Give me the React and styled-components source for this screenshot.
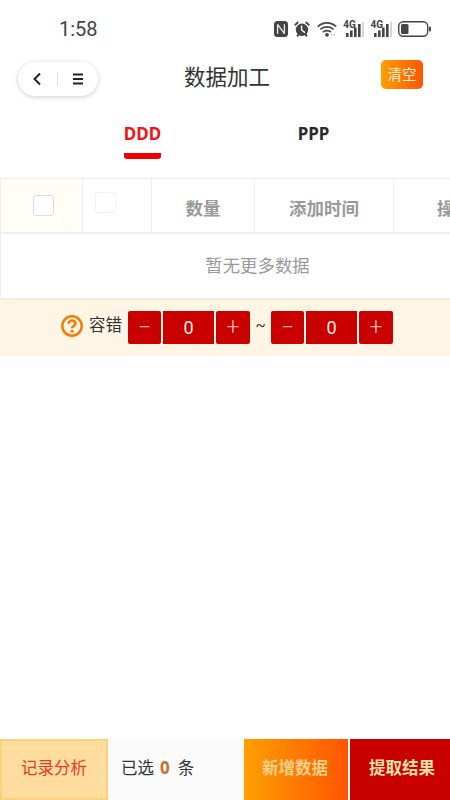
import React from "react";
import styled, { createGlobalStyle } from "styled-components";

const FONT = `"Noto Sans CJK SC", "Noto Sans", Roboto, sans-serif`;

const GlobalStyle = createGlobalStyle`
  html, body {
    margin: 0;
    padding: 0;
    background: #fff;
  }
  * {
    box-sizing: border-box;
  }
`;

const NfcIcon = () => (
  <svg width="14" height="16" viewBox="0 0 14 16">
    <rect x="0" y="0" width="14" height="16" rx="3.5" fill="#444" />
    <path d="M3.6 3.2v9.6M3.6 3.4l6.8 9.2M10.4 3.2v9.6" fill="none" stroke="#e8e8e8" strokeWidth="1.3" />
  </svg>
);

const AlarmIcon = () => (
  <svg width="16" height="16" viewBox="0 0 16 16">
    <circle cx="8" cy="8.8" r="6.2" fill="#444" />
    <path d="M0.8 4.4l3.4-3.4M15.2 4.4l-3.4-3.4M3 15.4l1.4-1.8M13 15.4l-1.4-1.8" stroke="#444" strokeWidth="1.8" fill="none" />
    <path d="M7.6 4.6v4.4l3.4 2.6" stroke="#fff" strokeWidth="1.4" fill="none" />
  </svg>
);

const WifiIcon = () => (
  <svg width="20" height="16" viewBox="0 0 20 16">
    <path d="M0.8 5.6C6 .6 14 .6 19.2 5.6M3.4 8.4c3.7-3.3 9.5-3.3 13.2 0M6 11c2.2-1.8 5.8-1.8 8 0" fill="none" stroke="#444" strokeWidth="1.7" />
    <circle cx="10" cy="13.8" r="1.9" fill="#444" />
    <path d="M13.6 14l1.3-1.1v2.2zM18 14l-1.3-1.1v2.2z" fill="#999" />
  </svg>
);

const SignalIcon = () => (
  <svg width="21" height="16" viewBox="0 0 21 16">
    <rect x="3" y="12" width="2.6" height="4" fill="#444" />
    <rect x="7" y="9.5" width="2.6" height="6.5" fill="#444" />
    <rect x="11" y="6.5" width="2.6" height="9.5" fill="#444" />
    <rect x="15" y="3" width="2.6" height="13" fill="#444" />
    <rect x="19.2" y="1" width="1.6" height="15" fill="#ccc" />
  </svg>
);

const BatteryIcon = () => (
  <svg width="33" height="16" viewBox="0 0 33 16">
    <rect x="0.7" y="0.7" width="29" height="14.6" rx="4.5" fill="none" stroke="#444" strokeWidth="1.4" />
    <rect x="3" y="3" width="7.5" height="10" rx="1.5" fill="#444" />
    <rect x="31" y="5.5" width="2" height="5" rx="1" fill="#444" />
  </svg>
);

const HelpIcon = () => (
  <svg width="22" height="22" viewBox="0 0 22 22">
    <circle cx="11" cy="11" r="9.7" fill="none" stroke="#f57c00" strokeWidth="2.5" />
    <path d="M7.6 8.8c0-2.1 1.5-3.4 3.4-3.4s3.4 1.2 3.4 3c0 2.6-3.3 2.5-3.3 4.8" fill="none" stroke="#f57c00" strokeWidth="2.5" />
    <circle cx="11.1" cy="16.3" r="1.5" fill="#f57c00" />
  </svg>
);

const BackIcon = () => (
  <svg width="10" height="14" viewBox="0 0 10 14">
    <path d="M8 1.5L2.5 7L8 12.5" fill="none" stroke="#222" strokeWidth="2" />
  </svg>
);

const MenuIcon = () => (
  <svg width="12" height="12" viewBox="0 0 12 12">
    <path d="M1 1.5h10M1 6h10M1 10.5h10" fill="none" stroke="#222" strokeWidth="2" />
  </svg>
);

const Stepper = ({ value }) => (
  <StepperRow>
    <StepButton>−</StepButton>
    <StepValue>{value}</StepValue>
    <StepButton $wide>+</StepButton>
  </StepperRow>
);

const App = () => (
  <Page>
    <GlobalStyle />
    <StatusBar>
      <Clock>1:58</Clock>
      <StatusIcons>
        <NfcIcon />
        <AlarmIcon />
        <WifiIcon />
        <Signal>
          <NetLabel>4G</NetLabel>
          <SignalIcon />
        </Signal>
        <Signal>
          <NetLabel>4G</NetLabel>
          <SignalIcon />
        </Signal>
        <BatteryIcon />
      </StatusIcons>
    </StatusBar>

    <NavBar>
      <Capsule>
        <CapsuleButton>
          <BackIcon />
        </CapsuleButton>
        <CapsuleDivider />
        <CapsuleButton>
          <MenuIcon />
        </CapsuleButton>
      </Capsule>
      <Title>数据加工</Title>
      <ClearButton>清空</ClearButton>
    </NavBar>

    <Tabs>
      <Tab $active>DDD</Tab>
      <Tab>PPP</Tab>
    </Tabs>

    <Table>
      <HeaderRow>
        <HeaderCell $width={82} $bg="#fffdf5">
          <Checkbox />
        </HeaderCell>
        <HeaderCell $width={69}>
          <Checkbox $faint />
        </HeaderCell>
        <HeaderCell $width={103}>
          <HeaderText>数量</HeaderText>
        </HeaderCell>
        <HeaderCell $width={139}>
          <HeaderText>添加时间</HeaderText>
        </HeaderCell>
        <HeaderCell $width={70} $cut>
          <HeaderText>操作</HeaderText>
        </HeaderCell>
      </HeaderRow>
      <EmptyRow>暂无更多数据</EmptyRow>
    </Table>

    <ToleranceBar>
      <HelpSlot>
        <HelpIcon />
      </HelpSlot>
      <ToleranceLabel>容错</ToleranceLabel>
      <Stepper value={0} />
      <Tilde>~</Tilde>
      <Stepper value={0} />
    </ToleranceBar>

    <Spacer />

    <BottomBar>
      <AnalysisButton>
        <BarLabel>记录分析</BarLabel>
      </AnalysisButton>
      <Selected>
        <BarLabel>已选</BarLabel>
        <SelectedCount>0</SelectedCount>
        <BarLabel>条</BarLabel>
      </Selected>
      <AddButton>
        <BarLabel>新增数据</BarLabel>
      </AddButton>
      <ExtractButton>
        <BarLabel>提取结果</BarLabel>
      </ExtractButton>
    </BottomBar>
  </Page>
);

const Page = styled.div`
  width: 450px;
  height: 800px;
  display: flex;
  flex-direction: column;
  overflow: hidden;
  background: #fff;
  font-family: ${FONT};
`;

const StatusBar = styled.div`
  height: 58px;
  flex: none;
  display: flex;
  align-items: center;
  justify-content: space-between;
  padding: 0 19px 0 59px;
`;

const Clock = styled.div`
  font-family: Roboto, sans-serif;
  font-size: 20px;
  color: #444;
`;

const StatusIcons = styled.div`
  display: flex;
  align-items: center;
  gap: 6.4px;
`;

const Signal = styled.div`
  position: relative;
  display: flex;
`;

const NetLabel = styled.span`
  position: absolute;
  left: 0;
  top: -2px;
  font-family: Roboto, sans-serif;
  font-size: 10px;
  line-height: 11px;
  font-weight: 700;
  color: #444;
`;

const NavBar = styled.div`
  height: 42px;
  flex: none;
  display: flex;
  align-items: center;
  justify-content: space-between;
  position: relative;
  padding: 0 27px 0 18px;
`;

const Capsule = styled.div`
  width: 80px;
  height: 34px;
  display: flex;
  align-items: center;
  gap: 8px;
  padding-left: 7px;
  border-radius: 17px;
  background: #fff;
  box-shadow: 0 1px 5px rgba(0, 0, 0, 0.2);
`;

const CapsuleButton = styled.div`
  display: flex;
  align-items: center;
  justify-content: center;
  width: 24px;
`;

const CapsuleDivider = styled.div`
  width: 1px;
  height: 14px;
  background: #ddd;
`;

const Title = styled.div`
  position: absolute;
  left: 4px;
  right: 0;
  top: 2px;
  text-align: center;
  font-size: 21.5px;
  line-height: 32px;
  color: #333;
  pointer-events: none;
`;

const ClearButton = styled.div`
  width: 42px;
  height: 29px;
  margin-top: -9px;
  padding-bottom: 3px;
  display: flex;
  align-items: center;
  justify-content: center;
  border-radius: 5px;
  background: linear-gradient(90deg, #ff9f00, #ff5500);
  color: #fff3dd;
  font-size: 14.5px;
`;

const Tabs = styled.div`
  height: 78px;
  flex: none;
  display: flex;
  padding: 18px 0 0 124px;
  gap: 134px;
`;

const Tab = styled.div`
  width: 37px;
  height: 41px;
  display: flex;
  justify-content: center;
  font-family: "Noto Sans", sans-serif;
  font-size: 17px;
  font-weight: 700;
  line-height: 32px;
  color: ${(p) => (p.$active ? "#f01414" : "#2a2a2a")};
  border-bottom: 6px solid ${(p) => (p.$active ? "#f00000" : "transparent")};
  border-radius: 0 0 3px 3px;
`;

const Table = styled.div`
  flex: none;
  display: flex;
  flex-direction: column;
  border-top: 1px solid #eee;
  overflow: hidden;
`;

const HeaderRow = styled.div`
  height: 55px;
  display: flex;
  border-bottom: 2px solid #eee;
`;

const HeaderCell = styled.div`
  width: ${(p) => p.$width}px;
  flex: none;
  display: flex;
  align-items: center;
  justify-content: ${(p) => (p.$cut ? "flex-start" : "center")};
  padding-left: ${(p) => (p.$cut ? "43px" : "0")};
  background: ${(p) => p.$bg || "#fff"};
  border-left: 1px solid #eee;
`;

const HeaderText = styled.span`
  margin-top: 3px;
  color: #999;
  font-size: 17.5px;
  font-weight: 700;
  white-space: nowrap;
`;

const Checkbox = styled.div`
  width: 21px;
  height: 21px;
  margin: ${(p) => (p.$faint ? "0 23px 6px 0" : "0 0 0 4px")};
  border: 1.5px solid ${(p) => (p.$faint ? "#f2f2f2" : "#dcdcdc")};
  border-radius: 3px;
  background: #fff;
`;

const EmptyRow = styled.div`
  height: 64px;
  display: flex;
  align-items: center;
  justify-content: center;
  padding: 0 0 4px 64px;
  border-left: 1px solid #eee;
  color: #999;
  font-size: 17.4px;
`;

const ToleranceBar = styled.div`
  height: 58px;
  flex: none;
  display: flex;
  align-items: center;
  padding: 0 0 1px 61px;
  background: #fef5e5;
  border-top: 2px solid #f2f0ec;
`;

const HelpSlot = styled.div`
  display: flex;
  margin-top: -3px;
`;

const ToleranceLabel = styled.span`
  margin: -7px 6px 0;
  font-size: 16.5px;
  color: #333;
`;

const StepperRow = styled.div`
  display: flex;
  gap: 2px;
`;

const StepButton = styled.div`
  width: ${(p) => (p.$wide ? "34px" : "33px")};
  height: 33px;
  display: flex;
  align-items: center;
  justify-content: center;
  border-radius: 2px;
  background: #c80000;
  color: #f0b4a8;
  font-family: Roboto, sans-serif;
  font-size: 23px;
  font-weight: 300;
`;

const StepValue = styled.div`
  width: 51px;
  height: 33px;
  display: flex;
  align-items: center;
  justify-content: center;
  background: #c80000;
  color: #fff0e0;
  font-family: Roboto, sans-serif;
  font-size: 18px;
`;

const Tilde = styled.span`
  width: 21px;
  margin-top: -5px;
  text-align: center;
  font-family: Roboto, sans-serif;
  font-size: 15px;
  color: #333;
`;

const Spacer = styled.div`
  flex: 1;
`;

const BottomBar = styled.div`
  height: 61px;
  flex: none;
  display: flex;
  background: #fafafa;
`;

const BarLabel = styled.span`
  margin-top: -5px;
  font-size: 16.5px;
`;

const BarButton = styled.div`
  display: flex;
  align-items: center;
  justify-content: center;
  flex: none;
  font-weight: 700;
`;

const AnalysisButton = styled(BarButton)`
  width: 108px;
  background: #fedd9e;
  border: 2px solid #f8d27e;
  color: #e83a2e;
  font-weight: 400;
`;

const Selected = styled.div`
  flex: 1;
  display: flex;
  align-items: center;
  gap: 6px;
  padding-left: 13px;
  color: #333;
`;

const SelectedCount = styled.span`
  margin: -4px 2px 0 0;
  font-family: "Noto Sans", sans-serif;
  font-weight: 700;
  color: #c8702a;
  font-size: 17px;
`;

const AddButton = styled(BarButton)`
  width: 104px;
  margin-right: 2px;
  padding-right: 2px;
  background: linear-gradient(90deg, #ff9f00, #ff5500);
  color: #fdd08a;
`;

const ExtractButton = styled(BarButton)`
  width: 100px;
  padding-left: 4px;
  background: #c80000;
  color: #fde0a8;
`;

export default App;
